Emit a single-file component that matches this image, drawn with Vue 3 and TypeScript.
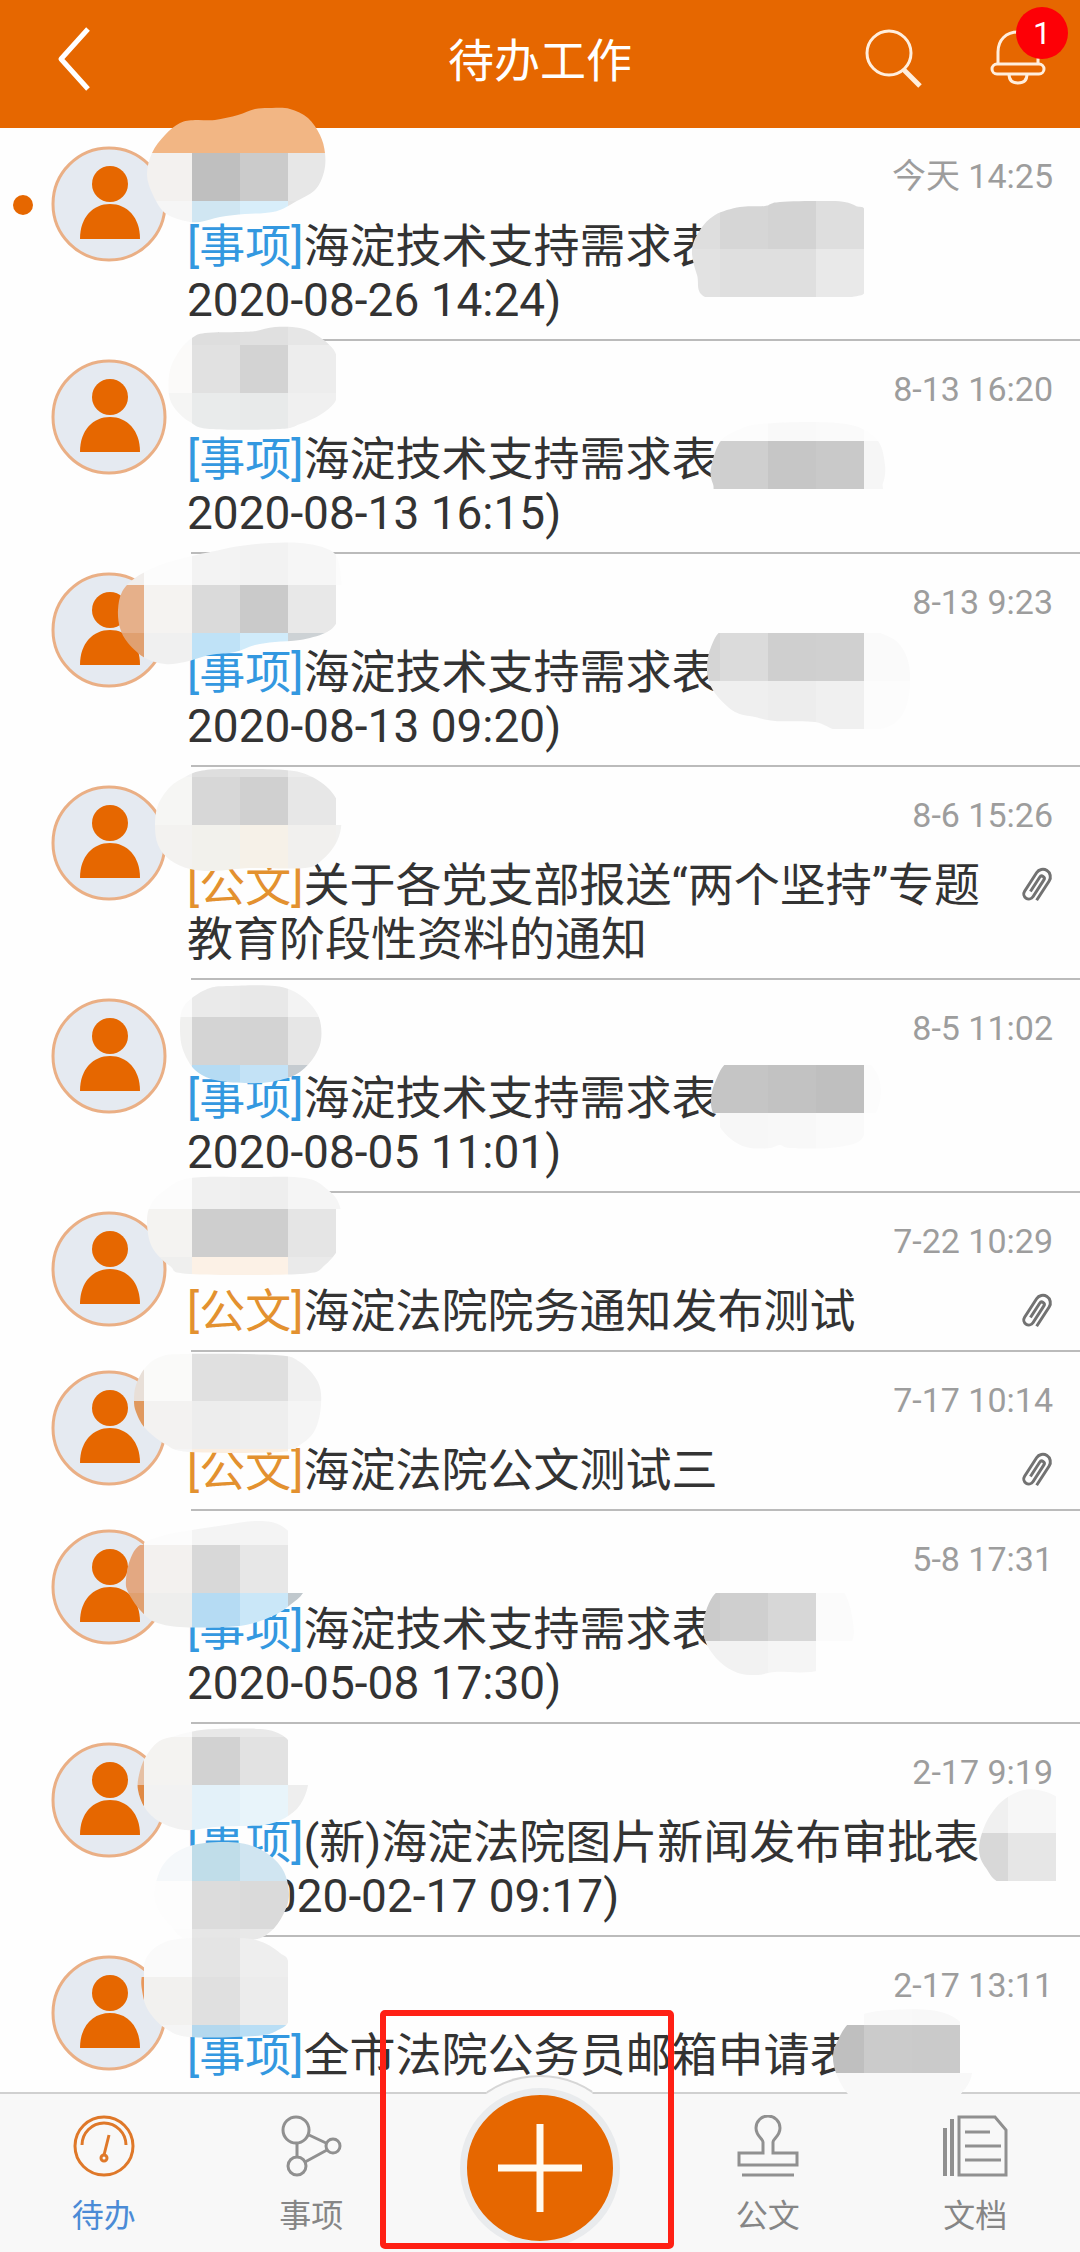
<script setup lang="ts">
type Kind = 'matter' | 'document'
type Point = [number, number]

interface Task {
  kind: Kind
  title: string
  detail?: string
  time: string
  unread?: boolean
  attachment?: boolean
  maskedLead?: boolean
}

interface CellRow {
  y: number
  x: number
  colors: string[]
}

interface Mosaic {
  outline: Point[]
  rows: CellRow[]
}

const CELL = 48
const kindLabel: Record<Kind, string> = { matter: '[事项]', document: '[公文]' }

const tasks: Task[] = [
  { kind: 'matter', title: '海淀技术支持需求表', detail: '2020-08-26 14:24)', time: '今天 14:25', unread: true },
  { kind: 'matter', title: '海淀技术支持需求表', detail: '2020-08-13 16:15)', time: '8-13 16:20' },
  { kind: 'matter', title: '海淀技术支持需求表', detail: '2020-08-13 09:20)', time: '8-13 9:23' },
  { kind: 'document', title: '关于各党支部报送“两个坚持”专题教育阶段性资料的通知', time: '8-6 15:26', attachment: true },
  { kind: 'matter', title: '海淀技术支持需求表', detail: '2020-08-05 11:01)', time: '8-5 11:02' },
  { kind: 'document', title: '海淀法院院务通知发布测试', time: '7-22 10:29', attachment: true },
  { kind: 'document', title: '海淀法院公文测试三', time: '7-17 10:14', attachment: true },
  { kind: 'matter', title: '海淀技术支持需求表', detail: '2020-05-08 17:30)', time: '5-8 17:31' },
  { kind: 'matter', title: '(新)海淀法院图片新闻发布审批表', detail: '2020-02-17 09:17)', time: '2-17 9:19', maskedLead: true },
  { kind: 'matter', title: '全市法院公务员邮箱申请表', detail: '2020-02-17 09:11)', time: '2-17 13:11' },
]

// Mosaic strokes that hide personal names, painted on a 48px grid.
const mosaics: Mosaic[] = [
  {
    outline: [[147, 175], [152, 153], [165, 135], [180, 123], [195, 120], [215, 120], [238, 115], [255, 109], [272, 108], [290, 109], [308, 118], [320, 135], [325, 153], [324, 172], [315, 190], [295, 202], [280, 210], [265, 213], [245, 214], [220, 217], [200, 222], [185, 221], [165, 213], [153, 195]],
    rows: [
      { y: 105, x: 144, colors: ['#f2b684', '#f2b684', '#f2b684', '#f2b684'] },
      { y: 153, x: 144, colors: ['#f3f1ef', '#bfbfbf', '#cbcbcb', '#e7e7e7'] },
      { y: 201, x: 144, colors: ['#f6f6f6', '#d0e6f2', '#d8eefa', '#e4e4e4'] },
    ],
  },
  {
    outline: [[692, 250], [700, 230], [715, 215], [740, 207], [765, 206], [780, 202], [835, 201], [856, 206], [866, 216], [866, 283], [852, 297], [780, 299], [708, 298], [697, 275]],
    rows: [
      { y: 201, x: 672, colors: ['#dedede', '#d6d6d6', '#d3d3d3', '#dedede'] },
      { y: 249, x: 672, colors: ['#e2e2e2', '#dfdfdf', '#dfdfdf', '#e9e9e9'] },
    ],
  },
  {
    outline: [[169, 395], [170, 370], [180, 350], [192, 338], [205, 333], [240, 332], [256, 331], [275, 327], [300, 328], [318, 336], [335, 352], [338, 375], [336, 400], [320, 415], [300, 424], [280, 429], [210, 429], [190, 422], [176, 410]],
    rows: [
      { y: 297, x: 144, colors: ['#fafafa', '#dedede', '#e0e0e0', '#e6e6e6'] },
      { y: 345, x: 144, colors: ['#fbfaf9', '#e1e1e1', '#d3d3d3', '#ededed'] },
      { y: 393, x: 144, colors: ['#f5f5f4', '#e9ebeb', '#e8eaea', '#f0f0f0'] },
    ],
  },
  {
    outline: [[711, 468], [720, 442], [738, 430], [760, 424], [815, 422], [855, 426], [878, 441], [885, 465], [883, 483], [874, 494], [800, 498], [724, 500], [713, 484]],
    rows: [
      { y: 393, x: 720, colors: ['#fcfcfc', '#f9f9f9', '#fafafa', '#fdfdfd'] },
      { y: 441, x: 672, colors: ['#d0d0d0', '#cfcfcf', '#c6c6c6', '#c9c9c9', '#f6f6f6'] },
    ],
  },
  {
    outline: [[118, 610], [122, 592], [135, 578], [160, 565], [192, 556], [215, 551], [240, 546], [270, 543], [300, 543], [325, 548], [338, 560], [342, 600], [337, 622], [325, 633], [300, 640], [275, 642], [255, 645], [235, 652], [210, 655], [185, 662], [165, 664], [145, 658], [128, 643], [120, 628]],
    rows: [
      { y: 537, x: 96, colors: ['#f1eeec', '#fcfcfc', '#f3f3f3', '#f2f2f2', '#f6f6f6', '#fcfcfc'] },
      { y: 585, x: 96, colors: ['#e6b08a', '#f5f3f1', '#dadada', '#cacaca', '#e8e8e8'] },
      { y: 633, x: 96, colors: ['#e0a070', '#f0f0f0', '#bfe2f7', '#d0ebfa', '#cdd2d5'] },
    ],
  },
  {
    outline: [[707, 665], [711, 647], [722, 630], [750, 620], [850, 624], [885, 635], [900, 645], [909, 665], [909, 695], [900, 718], [880, 729], [838, 730], [815, 722], [775, 721], [755, 717], [735, 712], [718, 697], [709, 682]],
    rows: [
      { y: 633, x: 672, colors: ['#d5d5d5', '#dbdbdb', '#cfcfcf', '#d0d0d0', '#fafafa'] },
      { y: 681, x: 672, colors: ['#f0f0f0', '#efefef', '#ededed', '#f0f0f0', '#fcfcfc'] },
    ],
  },
  {
    outline: [[155, 825], [158, 805], [170, 787], [185, 777], [200, 771], [225, 769], [285, 770], [310, 776], [330, 790], [340, 808], [341, 828], [335, 845], [322, 860], [305, 868], [250, 868], [215, 871], [190, 869], [170, 860], [158, 845]],
    rows: [
      { y: 729, x: 144, colors: ['#f3f3f3', '#dedede', '#e0e0e0', '#ececec'] },
      { y: 777, x: 144, colors: ['#f6f6f4', '#d7d7d7', '#d0d0d0', '#e7e7e7'] },
      { y: 825, x: 144, colors: ['#f3f2f0', '#f2f1ec', '#f6f1e8', '#f1f0ee', '#f1f1f0'] },
    ],
  },
  {
    outline: [[180, 1030], [182, 1010], [192, 998], [210, 988], [230, 986], [275, 986], [300, 995], [318, 1015], [321, 1040], [312, 1060], [295, 1075], [270, 1082], [245, 1083], [215, 1080], [195, 1070], [183, 1050]],
    rows: [
      { y: 969, x: 144, colors: ['#fafafa', '#eaeaea', '#e8e8e8', '#f3f3f3'] },
      { y: 1017, x: 144, colors: ['#f0f0ef', '#d4d4d4', '#d3d3d3', '#e6e6e6'] },
      { y: 1065, x: 144, colors: ['#eeeeee', '#b5dbf3', '#c3e2f6', '#c5cbd0'] },
    ],
  },
  {
    outline: [[711, 1098], [716, 1080], [728, 1062], [760, 1052], [850, 1054], [870, 1064], [880, 1082], [879, 1105], [867, 1128], [858, 1142], [830, 1148], [790, 1148], [780, 1145], [770, 1148], [750, 1148], [735, 1142], [722, 1130], [713, 1113]],
    rows: [
      { y: 1065, x: 672, colors: ['#c4c4c4', '#c5c5c5', '#c2c2c2', '#bfbfbf', '#fcfcfc'] },
      { y: 1113, x: 720, colors: ['#f7f7f7', '#f8f8f8', '#fafafa'] },
    ],
  },
  {
    outline: [[147, 1222], [151, 1204], [165, 1190], [190, 1178], [250, 1177], [305, 1178], [328, 1190], [340, 1207], [342, 1240], [325, 1265], [300, 1274], [190, 1274], [170, 1266], [152, 1247]],
    rows: [
      { y: 1161, x: 144, colors: ['#fcfcfc', '#f0f0f0', '#eeeeee', '#f5f5f5', '#f5f5f5'] },
      { y: 1209, x: 144, colors: ['#f4f3f1', '#cecece', '#cecece', '#e5e5e5'] },
      { y: 1257, x: 144, colors: ['#efefee', '#fcf1e6', '#fcf1e6', '#eaeaea'] },
    ],
  },
  {
    outline: [[134, 1400], [136, 1385], [145, 1368], [160, 1357], [185, 1354], [275, 1355], [300, 1362], [318, 1382], [321, 1405], [315, 1430], [300, 1445], [280, 1452], [190, 1452], [165, 1444], [145, 1428], [136, 1412]],
    rows: [
      { y: 1353, x: 96, colors: ['#e8dfd8', '#fafaf9', '#e0e0e0', '#dfdfdf', '#f0f0f0'] },
      { y: 1401, x: 96, colors: ['#e0995f', '#f3f2f1', '#ededed', '#eeeeee', '#f5f5f5'] },
      { y: 1449, x: 144, colors: ['#f5f5f5', '#fbeee0', '#fbeee0'] },
    ],
  },
  {
    outline: [[126, 1580], [130, 1560], [140, 1545], [165, 1535], [192, 1530], [225, 1525], [255, 1521], [280, 1525], [300, 1545], [308, 1575], [303, 1593], [290, 1605], [275, 1615], [250, 1624], [225, 1627], [180, 1627], [155, 1622], [140, 1610], [128, 1592]],
    rows: [
      { y: 1497, x: 144, colors: ['#fcfcfc', '#f4f4f4', '#f4f4f4'] },
      { y: 1545, x: 96, colors: ['#e3a882', '#f3f1ef', '#d8d8d8', '#e7e7e7'] },
      { y: 1593, x: 96, colors: ['#e0a070', '#eeeeed', '#b5dbf3', '#cae7f8', '#c0c8cd'] },
    ],
  },
  {
    outline: [[703, 1628], [707, 1608], [718, 1591], [740, 1584], [830, 1584], [845, 1594], [853, 1622], [850, 1645], [820, 1670], [775, 1672], [758, 1675], [738, 1673], [720, 1662], [707, 1645]],
    rows: [
      { y: 1593, x: 672, colors: ['#cbcbcb', '#cfcfcf', '#d7d7d7', '#fbfbfb'] },
      { y: 1641, x: 672, colors: ['#f2f2f2', '#f2f2f2', '#f5f5f5'] },
    ],
  },
  {
    outline: [[138, 1790], [139, 1775], [145, 1758], [158, 1742], [175, 1736], [195, 1731], [215, 1729], [260, 1729], [280, 1734], [292, 1745], [305, 1768], [308, 1785], [300, 1805], [285, 1818], [265, 1825], [240, 1826], [215, 1827], [185, 1830], [160, 1822], [145, 1808]],
    rows: [
      { y: 1689, x: 144, colors: ['#fafafa', '#e8e8e8', '#e9e9e9'] },
      { y: 1737, x: 96, colors: ['#e6c0a4', '#f4f3f1', '#d2d2d2', '#e2e2e2'] },
      { y: 1785, x: 96, colors: ['#e08a45', '#f2f2f2', '#e3f1f9', '#e8f4fa', '#eeeeee'] },
    ],
  },
  {
    outline: [[155, 1888], [163, 1865], [180, 1850], [205, 1843], [240, 1843], [265, 1852], [283, 1870], [289, 1895], [283, 1915], [270, 1932], [250, 1940], [190, 1940], [170, 1925], [157, 1907]],
    rows: [
      { y: 1833, x: 144, colors: ['#f5f8fa', '#c0dde9', '#d0e5f1'] },
      { y: 1881, x: 144, colors: ['#fdfdfd', '#dcdcdc', '#dadada', '#dadada'] },
      { y: 1929, x: 144, colors: ['#fcfcfc', '#e6e6e6', '#e8e8e8'] },
    ],
  },
  {
    outline: [[979, 1850], [985, 1825], [1000, 1803], [1020, 1791], [1038, 1790], [1060, 1799], [1075, 1820], [1075, 1870], [1060, 1886], [1004, 1884], [986, 1868]],
    rows: [
      { y: 1785, x: 960, colors: ['#f0f0f0', '#f7f7f7'] },
      { y: 1833, x: 960, colors: ['#d8d8d8', '#e6e6e6'] },
    ],
  },
  {
    outline: [[142, 1990], [142, 1975], [148, 1955], [165, 1942], [192, 1938], [240, 1938], [262, 1942], [280, 1953], [289, 1965], [290, 2016], [278, 2030], [255, 2036], [190, 2037], [165, 2028], [148, 2010]],
    rows: [
      { y: 1929, x: 144, colors: ['#fafafa', '#e4e4e4', '#eeeeee'] },
      { y: 1977, x: 96, colors: ['#e8975a', '#f2f1ef', '#e0e0e0', '#ececec'] },
      { y: 2025, x: 144, colors: ['#f5f5f5', '#b4d8ee', '#b9def5'] },
    ],
  },
  {
    outline: [[833, 2055], [838, 2040], [848, 2024], [864, 2014], [890, 2010], [930, 2010], [955, 2018], [968, 2035], [972, 2073], [960, 2095], [942, 2107], [868, 2107], [848, 2094], [836, 2073]],
    rows: [
      { y: 1977, x: 864, colors: ['#f9f9f9', '#f8f8f8'] },
      { y: 2025, x: 816, colors: ['#bfbfbf', '#cbcbcb', '#cacaca'] },
      { y: 2073, x: 816, colors: ['#f8f8f8', '#f8f8f8', '#f8f8f8', '#f8f8f8'] },
    ],
  },
]

// Closed Catmull-Rom curve through the brush outline.
function brushPath(points: Point[]): string {
  const n = points.length
  const at = (i: number): Point => points[(i + n) % n]
  let d = `M${points[0][0]} ${points[0][1]}`
  for (let i = 0; i < n; i++) {
    const [a, b, c, e] = [at(i - 1), at(i), at(i + 1), at(i + 2)]
    d += `C${b[0] + (c[0] - a[0]) / 6} ${b[1] + (c[1] - a[1]) / 6} `
    d += `${c[0] - (e[0] - b[0]) / 6} ${c[1] - (e[1] - b[1]) / 6} ${c[0]} ${c[1]}`
  }
  return d + 'Z'
}
</script>

<template>
  <div class="app">
    <header class="top-bar">
      <button class="icon-button back" type="button" aria-label="返回">
        <svg width="36" height="66" viewBox="0 0 36 66" fill="none" stroke="#fff" stroke-width="5">
          <path d="M32 3 L5 33 L32 63" stroke-linejoin="round" />
        </svg>
      </button>
      <h1 class="page-title">待办工作</h1>
      <div class="actions">
        <button class="icon-button" type="button" aria-label="搜索">
          <svg width="60" height="60" viewBox="0 0 60 60" fill="none" stroke="#ffeedd">
            <circle cx="25" cy="24" r="22" stroke-width="3" />
            <path d="M39 40 L56 57" stroke-width="5" />
          </svg>
        </button>
        <button class="icon-button bell" type="button" aria-label="通知">
          <svg width="56" height="60" viewBox="0 0 56 60" fill="none" stroke="#ffeedd" stroke-width="3">
            <path d="M8 35 V23 C8 11 16 3 28 3 C40 3 48 11 48 23 V35" />
            <rect x="2" y="35" width="52" height="10" rx="5" />
            <path d="M19 45 C19 51 22 54 28 54 C34 54 37 51 37 45" />
          </svg>
          <span class="badge">1</span>
        </button>
      </div>
    </header>

    <main class="list-area">
      <ul class="task-list">
        <li v-for="(task, index) in tasks" :key="index" class="task">
          <span v-if="task.unread" class="unread-dot"></span>
          <svg class="avatar" viewBox="0 0 116 116">
            <circle cx="58" cy="58" r="56" fill="#e5eaf1" stroke="#eaaf85" stroke-width="3" />
            <circle cx="59" cy="38" r="18" fill="#e66700" />
            <path d="M29 93 C29 71 42 58 59 58 C76 58 89 71 89 93 Z" fill="#e66700" />
          </svg>
          <a class="task-body" href="#">
            <time class="task-time">{{ task.time }}</time>
            <span class="task-line">
              <span class="task-title">
                <span :class="task.kind">{{ kindLabel[task.kind] }}</span>{{ task.title }}
                <span v-if="task.detail" class="detail"><span v-if="task.maskedLead" class="masked-lead"></span>{{ task.detail }}</span>
              </span>
              <svg v-if="task.attachment" class="clip" viewBox="0 0 32 36" fill="none" stroke="#727272" stroke-width="3">
                <path
                  transform="translate(16 18) rotate(33)"
                  d="M8 13 V-10 A7 7 0 0 0 -7 -10 V12 A5 5 0 0 0 3 12 V-8 A2 2 0 0 0 -2 -8 V9"
                />
              </svg>
            </span>
          </a>
        </li>
      </ul>
    </main>

    <nav class="tab-bar">
      <button class="tab active" type="button">
        <svg width="62" height="62" viewBox="0 0 62 62" fill="none" stroke="#df7829" stroke-width="3">
          <circle cx="31" cy="31" r="29" />
          <path d="M9 30 A22 22 0 0 1 53 30" />
          <path d="M36 20 L31 40" />
          <circle cx="31" cy="43" r="3" />
        </svg>
        <span>待办</span>
      </button>
      <button class="tab" type="button">
        <svg width="62" height="62" viewBox="0 0 62 62" fill="none" stroke="#909090" stroke-width="3">
          <circle cx="16" cy="15" r="13" />
          <circle cx="53" cy="31" r="7" />
          <circle cx="17" cy="51" r="9" />
          <path d="M29 20 L46 28 M17 29 V42 M25 47 L47 35" />
        </svg>
        <span>事项</span>
      </button>
      <div class="center-slot">
        <span class="hump"></span>
        <button class="add-button" type="button" aria-label="新建">
          <svg width="88" height="88" viewBox="0 0 88 88" stroke="#fffaf0" stroke-width="7">
            <path d="M2 44 H86 M44 0 V88" />
          </svg>
        </button>
        <span class="highlight"></span>
      </div>
      <button class="tab" type="button">
        <svg width="62" height="62" viewBox="0 0 62 62" fill="none" stroke="#909090" stroke-width="3">
          <path d="M26 38 V27 C26 24 19 21 19 13 A12 12 0 0 1 43 13 C43 21 36 24 36 27 V38 H60 V50 H2 V38 Z" />
          <path d="M5 60 H57" />
        </svg>
        <span>公文</span>
      </button>
      <button class="tab" type="button">
        <svg width="66" height="62" viewBox="0 0 66 62" fill="none" stroke="#909090" stroke-width="3">
          <path d="M17 2 H53 L64 15 V60 H17 Z M23 17 H48 M23 31 H59 M23 45 H59" />
          <path d="M3 13 V61 M10 4 V61" stroke-width="4" />
        </svg>
        <span>文档</span>
      </button>
    </nav>

    <svg class="mosaic-layer" aria-hidden="true">
      <defs>
        <clipPath v-for="(mosaic, m) in mosaics" :id="`brush-${m}`" :key="m">
          <path :d="brushPath(mosaic.outline)" />
        </clipPath>
      </defs>
      <g v-for="(mosaic, m) in mosaics" :key="m" :clip-path="`url(#brush-${m})`">
        <template v-for="row in mosaic.rows" :key="row.y">
          <rect
            v-for="(color, c) in row.colors"
            :key="c"
            :x="row.x + c * CELL"
            :y="row.y"
            :width="CELL"
            :height="CELL"
            :fill="color"
          />
        </template>
      </g>
    </svg>
  </div>
</template>

<style>
body {
  margin: 0;
}
</style>

<style scoped>
.app {
  position: relative;
  display: flex;
  flex-direction: column;
  height: 100vh;
  overflow: hidden;
  background: #fefefe;
  color: #333;
  font-family: Roboto, 'Noto Sans CJK SC', sans-serif;
}

button {
  margin: 0;
  padding: 0;
  border: 0;
  background: none;
  color: inherit;
  font: inherit;
}

svg {
  display: block;
}

.top-bar {
  display: grid;
  flex: none;
  grid-template-columns: 1fr auto 1fr;
  align-items: center;
  box-sizing: border-box;
  height: 128px;
  padding: 0 34px 10px 56px;
  background: #e66700;
  color: #fff;
}

.page-title {
  margin: 0;
  padding: 3px 22px 0 0;
  font-size: 46px;
  font-weight: 400;
  line-height: 54px;
}

.back {
  justify-self: start;
}

.actions {
  display: flex;
  justify-content: flex-end;
  align-items: center;
  gap: 66px;
}

.bell {
  position: relative;
}

.badge {
  position: absolute;
  top: -22px;
  right: -22px;
  width: 52px;
  height: 52px;
  border-radius: 50%;
  background: #fd0006;
  font-size: 32px;
  line-height: 52px;
  text-align: center;
}

.list-area {
  flex: 1;
  min-height: 0;
  overflow: hidden;
}

.task-list {
  margin: 0;
  padding: 0;
  list-style: none;
}

.task {
  position: relative;
  display: flex;
  padding-left: 51px;
}

.unread-dot {
  position: absolute;
  top: 67px;
  left: 13px;
  width: 20px;
  height: 20px;
  border-radius: 50%;
  background: #e66700;
}

.avatar {
  flex: none;
  width: 116px;
  height: 116px;
  margin: 18px 24px 0 0;
}

.task-body {
  display: flex;
  flex: 1;
  flex-direction: column;
  gap: 23px;
  min-width: 0;
  padding: 28px 27px 12px 0;
  border-bottom: 2px solid #bbb;
  color: inherit;
  text-decoration: none;
}

.task-time {
  align-self: flex-end;
  color: #9d9d9d;
  font-size: 34px;
  line-height: 40px;
}

.task-line {
  display: flex;
  gap: 30px;
  margin-left: -4px;
}

.task-title {
  flex: 1;
  font-size: 46px;
  line-height: 54px;
}

.matter {
  color: #3398e0;
}

.document {
  color: #e3912f;
}

.detail {
  display: block;
}

.masked-lead {
  display: inline-block;
  width: 58px;
}

.clip {
  flex: none;
  width: 32px;
  height: 36px;
  margin-top: 9px;
}

.tab-bar {
  display: flex;
  flex: none;
  height: 158px;
  padding-right: 1px;
  border-top: 2px solid #d0d0d0;
  background: #f8f8f8;
}

.tab {
  display: flex;
  flex: 5;
  flex-direction: column;
  align-items: center;
  gap: 20px;
  padding-top: 21px;
  color: #868686;
  font-size: 32px;
  line-height: 38px;
}

.active {
  color: #4b8bd6;
}

.center-slot {
  position: relative;
  display: flex;
  flex: 6;
  justify-content: center;
  align-items: flex-start;
}

.hump {
  position: absolute;
  top: -19px;
  left: 50%;
  width: 190px;
  height: 177px;
  margin-left: -95px;
  box-sizing: border-box;
  border: 2px solid #d6d6d6;
  border-bottom: 0;
  border-radius: 95px 95px 0 0;
  background: #f8f8f8;
  clip-path: inset(0 42px 0 42px);
}

.add-button {
  position: relative;
  display: flex;
  align-items: center;
  justify-content: center;
  width: 160px;
  height: 160px;
  margin-top: -6px;
  border: 7px solid #e9ebed;
  box-sizing: border-box;
  border-radius: 50%;
  background: #e66700;
}

.highlight {
  position: absolute;
  inset: -84px -10px 3px -35px;
  border: 6px solid #ff2015;
  border-radius: 5px;
  pointer-events: none;
}

.mosaic-layer {
  position: absolute;
  top: 0;
  left: 0;
  width: 100%;
  height: 100%;
  pointer-events: none;
}
</style>
